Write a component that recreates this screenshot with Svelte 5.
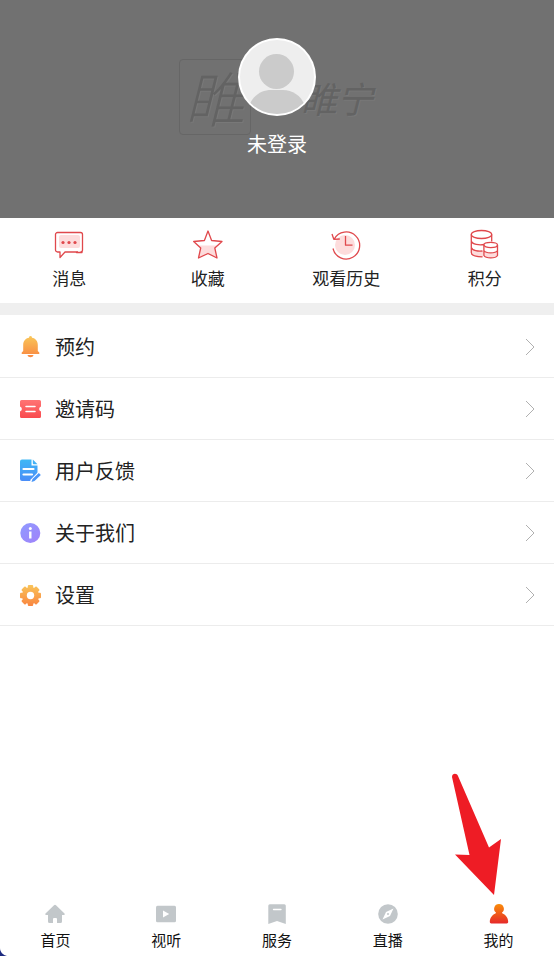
<script>
  const shortcuts = [
    { id: "message", label: "消息" },
    { id: "favorite", label: "收藏" },
    { id: "history", label: "观看历史" },
    { id: "points", label: "积分" },
  ];

  const menu = [
    { id: "reserve", label: "预约" },
    { id: "invite", label: "邀请码" },
    { id: "feedback", label: "用户反馈" },
    { id: "about", label: "关于我们" },
    { id: "settings", label: "设置" },
  ];

  const tabs = [
    { id: "home", label: "首页" },
    { id: "video", label: "视听" },
    { id: "service", label: "服务" },
    { id: "live", label: "直播" },
    { id: "mine", label: "我的" },
  ];

  const teeth = [0, 45, 90, 135];

  let active = "mine";
</script>

<!-- gradients shared by the icons -->
<svg class="defs" width="0" height="0" aria-hidden="true">
  <defs>
    <linearGradient id="orange" gradientUnits="userSpaceOnUse" x1="0" y1="1" x2="0" y2="23">
      <stop offset="0" stop-color="#f9c75a" />
      <stop offset="1" stop-color="#f98540" />
    </linearGradient>
    <linearGradient id="red" x1="0" y1="0" x2="0" y2="1">
      <stop offset="0" stop-color="#ff7474" />
      <stop offset="1" stop-color="#f94a4e" />
    </linearGradient>
    <linearGradient id="blue" x1="0" y1="0" x2="0" y2="1">
      <stop offset="0" stop-color="#3fb8f5" />
      <stop offset="1" stop-color="#4a8df8" />
    </linearGradient>
    <linearGradient id="purple" x1="0" y1="0" x2="1" y2="1">
      <stop offset="0" stop-color="#8f9bff" />
      <stop offset="1" stop-color="#a182fa" />
    </linearGradient>
    <linearGradient id="flame" x1="0" y1="0" x2="0" y2="1">
      <stop offset="0" stop-color="#f98c0a" />
      <stop offset="1" stop-color="#e62a2a" />
    </linearGradient>
    <mask id="gear" maskUnits="userSpaceOnUse" x="0" y="0" width="24" height="24">
      <g fill="#fff">
        <circle cx="12.5" cy="12.5" r="8.6" />
        {#each teeth as angle}
          <rect x="9.8" y="2" width="5.4" height="21" rx="1" transform="rotate({angle} 12.5 12.5)" />
        {/each}
      </g>
      <circle cx="12.5" cy="12.5" r="3.7" fill="#000" />
    </mask>
  </defs>
</svg>

<div class="page">
  <header class="profile">
    <div class="watermark" aria-hidden="true">
      <span class="seal">睢</span>
      <span class="brand">睢宁</span>
    </div>
    <button class="login">
      <svg class="avatar" viewBox="0 0 78 78">
        <defs>
          <clipPath id="avatar-clip"><circle cx="39" cy="39" r="37" /></clipPath>
        </defs>
        <circle cx="39" cy="39" r="39" fill="#fff" />
        <circle cx="39" cy="39" r="37" fill="#eee" />
        <g clip-path="url(#avatar-clip)" fill="#cbcbcb">
          <circle cx="38.5" cy="33.5" r="17.5" />
          <path d="M11 78V68C15 57 24 52 33 52h12c9 0 18 5 22 16v10z" />
        </g>
      </svg>
      <span class="name">未登录</span>
    </button>
  </header>

  <section class="shortcuts">
    {#each shortcuts as item}
      <button class="shortcut">
        <svg viewBox="0 0 32 32" fill="none" stroke="#e0484c" stroke-width="1.3" stroke-linejoin="round">
          {#if item.id === "message"}
            <rect x="6" y="7" width="21" height="13" rx="2" fill="#fddcdc" stroke="none" />
            <path d="M25 24H12L7 29.5V24H4.5a2 2 0 0 1-2-2V6.5a2 2 0 0 1 2-2h23a2 2 0 0 1 2 2V22a2 2 0 0 1-2 2" />
            <path d="M23.500 24.500H29" stroke-linecap="round" />
            <g fill="#e0484c" stroke="none">
              <circle cx="10" cy="14.5" r="1.6" />
              <circle cx="16" cy="14.5" r="1.6" />
              <circle cx="22" cy="14.5" r="1.6" />
            </g>
          {:else if item.id === "favorite"}
            <path d="M7 17.5h18L22.800 20 25 30l-9-4-10 4 2.500-10z" fill="#fddcdc" stroke="none" />
            <path d="M16 3l3.600 9.500L30 13.500 22.800 20 25 30l-9-4.500L6.500 30l2.200-10L1.700 13.500l10.700-1z" />
          {:else if item.id === "history"}
            <circle cx="15" cy="17" r="10" fill="#fddcdc" stroke="none" />
            <path d="M3 20.500A13.500 13.500 0 1 0 4.300 11M2 6l1.800 5.300 6-.3M15.500 8v9.200h7" />
          {:else}
            <path d="M3 20c4 3 8 3 11 3v6c-5 0-11-1-11-4z" fill="#fddcdc" stroke="none" />
            <ellipse cx="12.500" cy="6.500" rx="10.200" ry="4" />
            <path d="M2.300 6.500v18c0 3 5 4.300 11.200 4.300M22.700 6.500v7M2.300 13c1 3.500 8 4.500 13 3.500M2.300 19.500c1 3.300 7 4 11.200 3.500" />
            <path d="M15 17v10.500c2 3.300 11.500 3.300 13.500 0V17z" fill="#fff" stroke="none" />
            <path d="M15 23c3 2.500 10 2.500 13.500 0v5c-2 3-11 3-13.500 0z" fill="#fddcdc" stroke="none" />
            <ellipse cx="21.700" cy="17" rx="6.800" ry="2.600" fill="#fff" />
            <path d="M14.900 17v10.500c2 3.300 11.500 3.300 13.600 0V17M14.900 22.500c2 3.200 11.500 3.200 13.600 0" />
          {/if}
        </svg>
        <span>{item.label}</span>
      </button>
    {/each}
  </section>

  <ul class="menu">
    {#each menu as item}
      <li>
        <button class="row">
          <svg class="icon" viewBox="0 0 24 24">
            {#if item.id === "reserve"}
              <path
                fill="url(#orange)"
                d="M12.500 1a1.500 1.500 0 0 1 1.500 1.700c3.500.7 5.800 3.300 5.800 7V16l1.500 1.500V19H3.700v-1.500L5.200 16V9.700c0-3.700 2.300-6.300 5.800-7A1.500 1.500 0 0 1 12.500 1zM9.500 20h6c-.3 1.500-1.500 2.200-3 2.200s-2.700-.7-3-2.200z"
              />
            {:else if item.id === "invite"}
              <path
                fill="url(#red)"
                d="M3.500 3h18A1.500 1.500 0 0 1 23 4.500V9.500a2.600 2.600 0 0 0 0 5v5a1.500 1.500 0 0 1-1.500 1.500h-18A1.500 1.500 0 0 1 2 19.500v-5a2.600 2.600 0 0 0 0-5V4.500A1.500 1.500 0 0 1 3.500 3z"
              />
              <path d="M8 9.500h9M8 14.500h9" stroke="#fff" stroke-width="1.500" stroke-linecap="round" />
            {:else if item.id === "feedback"}
              <path fill="url(#blue)" d="M4 .5h9.500V6.500h6V14l-7.500 8H4a2 2 0 0 1-2-2V2.500a2 2 0 0 1 2-2z" />
              <path d="M14.800.5l4.700 4.700h-3.700a1 1 0 0 1-1-1z" fill="#42b2f6" />
              <path d="M5.500 10h10M5.500 15.500h8.500" stroke="#fff" stroke-width="2.200" stroke-linecap="round" />
              <path d="M14 22.700l8-8" stroke="#fff" stroke-width="5" />
              <path d="M13.500 23l1-3 6.300-6 2 2-6.300 6z" fill="#4a96f8" />
            {:else if item.id === "about"}
              <circle cx="12.300" cy="12" r="10" fill="url(#purple)" />
              <circle cx="12.300" cy="7.600" r="1.500" fill="#fff" />
              <path d="M12.300 10.500v7" stroke="#fff" stroke-width="2.400" />
            {:else}
              <rect width="24" height="24" fill="url(#orange)" mask="url(#gear)" />
            {/if}
          </svg>
          <span class="label">{item.label}</span>
          <svg class="chevron" viewBox="0 0 10 18" fill="none" stroke="#b0b0b0">
            <path d="M1 1l8 8-8 8" />
          </svg>
        </button>
      </li>
    {/each}
  </ul>

  <nav class="tabs">
    {#each tabs as tab}
      <button class="tab" aria-current={active === tab.id ? "page" : undefined} on:click={() => (active = tab.id)}>
        <svg class="icon" viewBox="0 0 24 24" fill="#c2c7ca">
          {#if tab.id === "home"}
            <path
              d="M11 3.200a1.500 1.500 0 0 1 2 0l8.500 8.300c.6.700.3 1.500-.6 1.500H19v6.500a1.500 1.500 0 0 1-1.500 1.500H14v-4a1 1 0 0 0-1-1h-2a1 1 0 0 0-1 1v4H6.500A1.500 1.500 0 0 1 5 19.500V13H3.200c-1 0-1.300-.8-.7-1.500z"
            />
          {:else if tab.id === "video"}
            <rect x="2" y="3.700" width="20" height="16.500" rx="1.500" />
            <path d="M9 8.500v7l6.200-3.500z" fill="#fff" />
          {:else if tab.id === "service"}
            <path d="M4.800 2.300h14.500a1.500 1.500 0 0 1 1.500 1.500V22L12 19l-8.700 3V3.800a1.500 1.500 0 0 1 1.500-1.500z" />
            <path d="M8.500 7.500h7.500" stroke="#fff" stroke-width="1.300" stroke-linecap="round" />
          {:else if tab.id === "live"}
            <circle cx="12" cy="12" r="9.800" />
            <path d="M17.500 6.500l-3.500 7.500-7.500 3.500 3.500-7.500z" fill="#fff" />
            <circle cx="12" cy="12" r="1" />
          {:else}
            <path
              fill="url(#flame)"
              d="M12 2a4.800 4.800 0 0 1 3 8.600c0 .5.400.9 1 1.100 3 1.300 5.200 4.500 5.200 8.100 0 1-.6 1.600-1.500 1.600H4.300c-.9 0-1.500-.6-1.500-1.600 0-3.600 2.200-6.800 5.200-8.100.6-.2 1-.6 1-1.100A4.800 4.800 0 0 1 12 2z"
            />
          {/if}
        </svg>
        <span>{tab.label}</span>
        {#if tab.id === "mine"}
          <svg class="pointer" viewBox="0 0 50 122">
            <path d="M0 4C0 0 5 0 6 3l31 71.500L49 66l-7 56L3 81.500l14.500.5z" fill="#ee1c25" />
          </svg>
        {/if}
      </button>
    {/each}
    <svg class="corner" viewBox="0 0 8 8"><path d="M0 0c0 4 3 7 7 8H0z" fill="#1d2a80" /></svg>
  </nav>
</div>

<style>
  :global(body) {
    margin: 0;
    background: #fff;
  }

  .page {
    display: flex;
    flex-direction: column;
    min-height: 100vh;
    font-family: "Noto Sans CJK SC", sans-serif;
    color: #222;
  }

  button {
    margin: 0;
    padding: 0;
    border: none;
    background: none;
    font-family: inherit;
    color: inherit;
    cursor: pointer;
  }

  svg {
    display: block;
    flex: none;
  }

  .defs {
    position: absolute;
  }

  .profile {
    position: relative;
    display: flex;
    justify-content: center;
    align-items: flex-start;
    box-sizing: border-box;
    height: 218px;
    padding-top: 38px;
    background: #717171;
  }

  .watermark {
    position: absolute;
    top: 57px;
    left: 50%;
    display: flex;
    align-items: center;
    gap: 50px;
    width: 200px;
    margin-left: -98px;
    color: #636363;
    text-shadow: 1px 1px 0 #787878;
  }

  .seal {
    box-sizing: border-box;
    flex: none;
    width: 72px;
    height: 76px;
    border: 1px solid #666;
    border-radius: 4px;
    font-size: 60px;
    line-height: 72px;
    font-style: italic;
    font-weight: 300;
    text-align: center;
  }

  .brand {
    font-size: 36px;
    line-height: 80px;
    font-style: italic;
    white-space: nowrap;
  }

  .login {
    position: relative;
    display: flex;
    flex-direction: column;
    align-items: center;
    gap: 14px;
    color: #fff;
  }

  .avatar {
    width: 78px;
    height: 78px;
  }

  .name {
    font-size: 20px;
    line-height: 28px;
  }

  .shortcuts {
    display: grid;
    grid-template-columns: repeat(4, 1fr);
    padding: 10px 0 13px;
    border-bottom: 12px solid #efefef;
  }

  .shortcut {
    display: flex;
    flex-direction: column;
    align-items: center;
    gap: 5px;
    font-size: 17px;
    line-height: 25px;
  }

  .shortcut svg {
    width: 32px;
    height: 32px;
  }

  .menu {
    margin: 0;
    padding: 1px 0 0;
    list-style: none;
  }

  .row {
    display: flex;
    align-items: center;
    gap: 13px;
    width: 100%;
    height: 62px;
    padding: 0 19px 0 18px;
    border-bottom: 1px solid #ececec;
    font-size: 20px;
    line-height: 28px;
    text-align: left;
  }

  .icon {
    width: 24px;
    height: 24px;
  }

  .label {
    flex: 1;
  }

  .chevron {
    width: 10px;
    height: 18px;
  }

  .tabs {
    position: relative;
    display: grid;
    grid-template-columns: repeat(5, 1fr);
    margin-top: auto;
    padding-bottom: 5px;
  }

  .tab {
    position: relative;
    display: flex;
    flex-direction: column;
    align-items: center;
    gap: 3px;
    font-size: 15px;
    line-height: 22px;
    color: #111;
  }

  .pointer {
    position: absolute;
    right: 52px;
    bottom: 56px;
    width: 50px;
    height: 122px;
    pointer-events: none;
  }

  .corner {
    position: absolute;
    left: 0;
    bottom: 0;
    width: 8px;
    height: 8px;
  }
</style>
